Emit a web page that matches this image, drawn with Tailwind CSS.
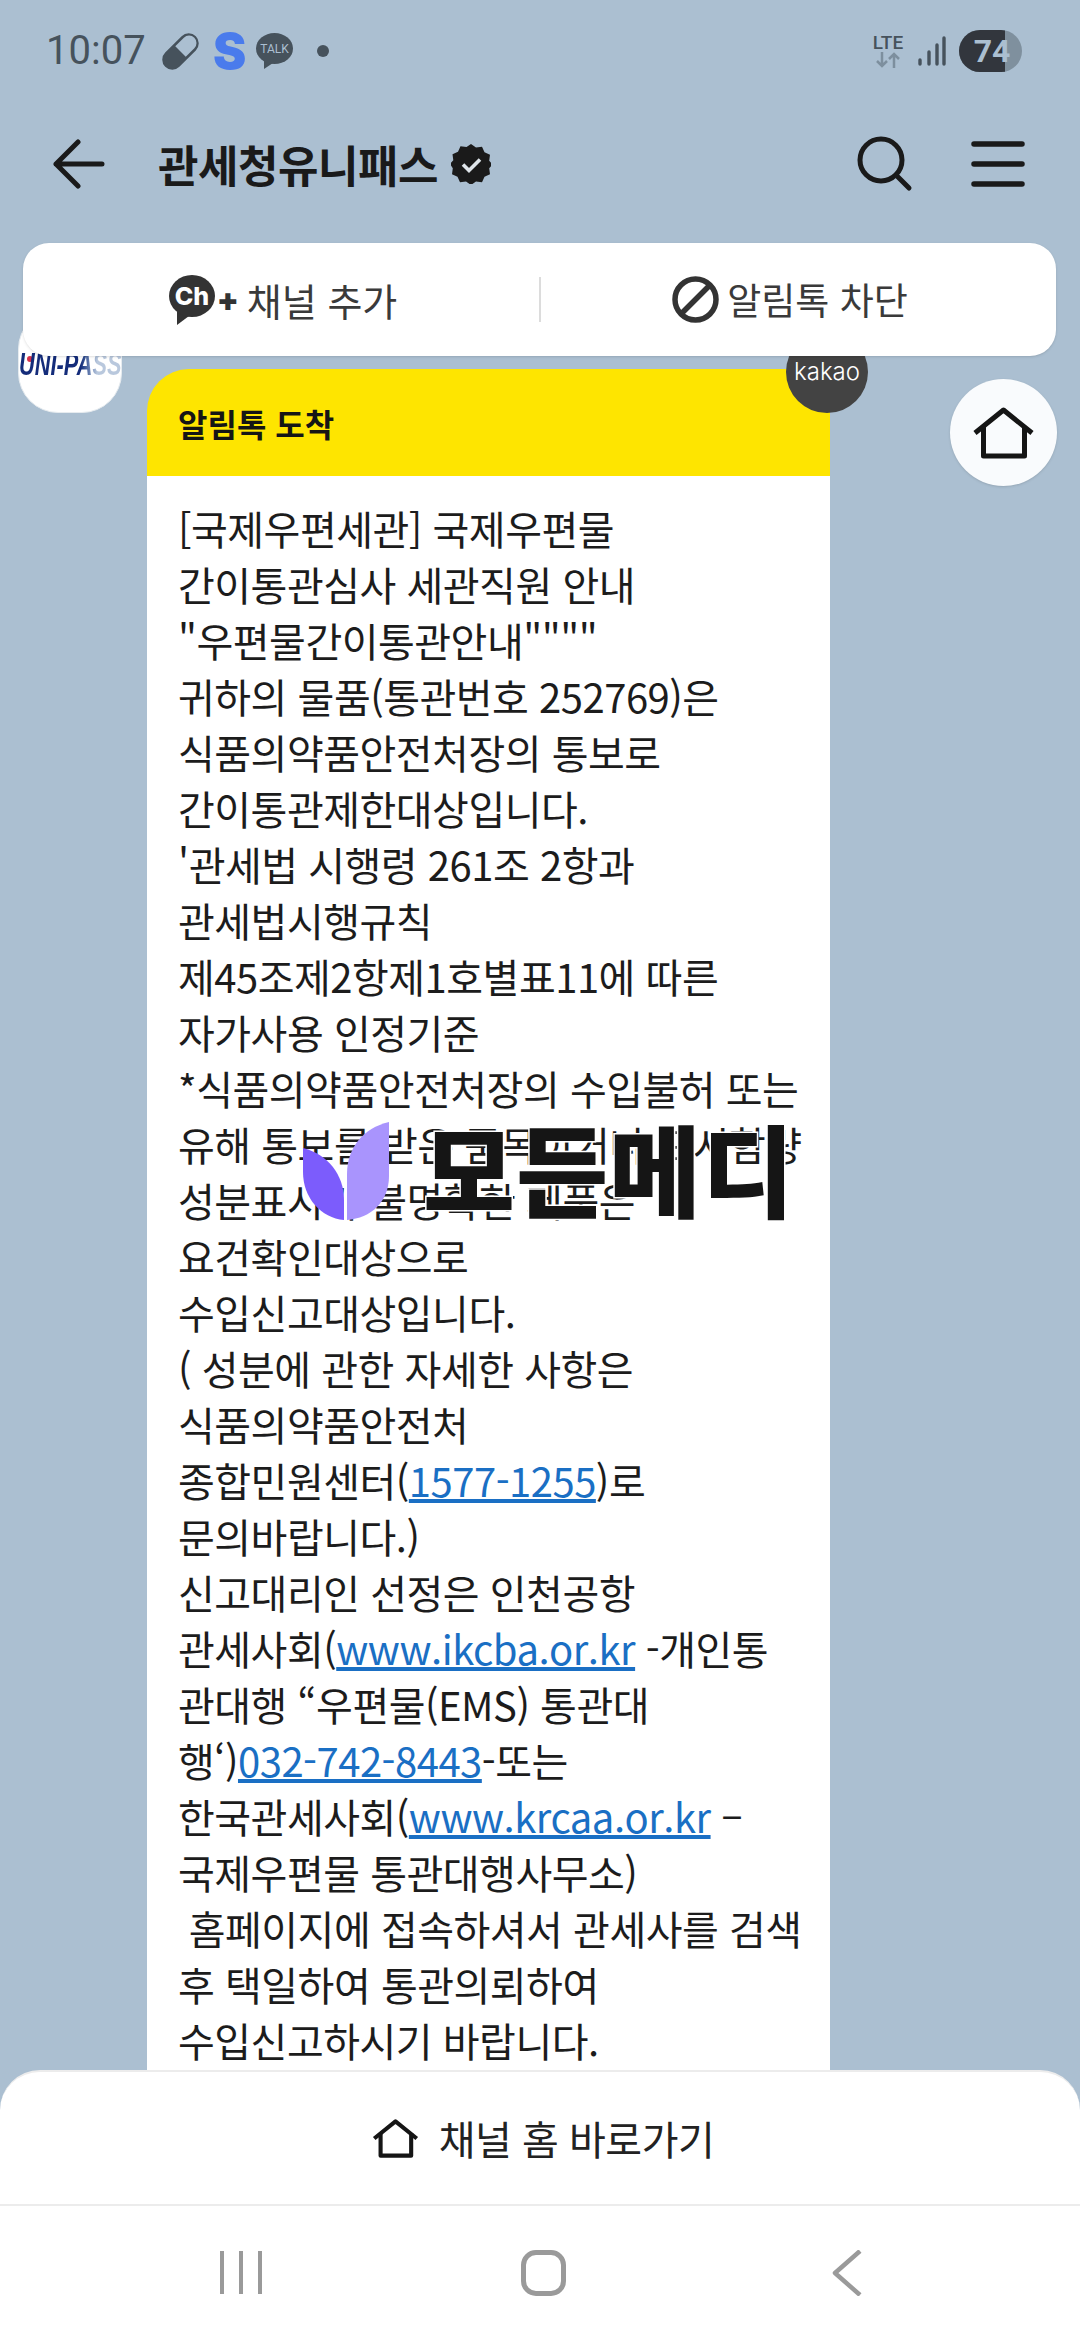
<!doctype html>
<html lang="ko">
<head>
<meta charset="utf-8">
<title>관세청유니패스</title>
<script src="https://cdn.jsdelivr.net/npm/@tailwindcss/browser@4"></script>
</head>
<body class="bg-[#abbfd1]">
<div class="relative w-[1080px] h-[2340px] overflow-hidden flex flex-col bg-[#abbfd1] text-[#1a1a1a] font-['Noto_Sans_CJK_KR',sans-serif]">

  <!-- status bar -->
  <div class="h-[102px] shrink-0 flex items-center justify-between pl-[46px] pr-[58px] text-[#46525c]">
    <div class="flex items-center">
      <span class="text-[40px] font-['Roboto',sans-serif] w-[116px]">10:07</span>
      <svg class="w-[37px] h-[37px]" viewBox="0 0 35 35">
        <g transform="rotate(-45 17.5 17.5)">
          <rect x="-3" y="8" width="41" height="19" rx="9.5" fill="#46525c"/>
          <path d="M17.5 10.5H29a7 7 0 0 1 0 14H17.5z" fill="#abbfd1"/>
        </g>
      </svg>
      <span class="ml-[14px] w-[28px] text-[50px] leading-none font-black font-['Inter',sans-serif] text-[#4a7bec]">S</span>
      <svg class="ml-[15px] w-[37px] h-[36px]" viewBox="0 0 37 36">
        <path d="M8 27 L8 36 L17 30 Z" fill="#46525c"/>
        <ellipse cx="18.5" cy="15.5" rx="18.5" ry="15.5" fill="#46525c"/>
        <text x="18.5" y="20" text-anchor="middle" font-size="12" font-family="Roboto" fill="#abbfd1">TALK</text>
      </svg>
      <span class="ml-[24px] w-[12px] h-[12px] rounded-full bg-[#46525c]"></span>
    </div>
    <div class="flex items-center">
      <div class="w-[34px] flex flex-col items-center">
        <span class="text-[19px] leading-[18px] font-medium font-['Roboto',sans-serif]">LTE</span>
        <svg class="w-[24px] h-[16px]" viewBox="0 0 24 16" fill="none" stroke="#7d8f9e" stroke-width="2.5">
          <path d="M6 0V14M1 9L6 14L11 9"/>
          <path d="M18 16V2M13 7L18 2L23 7"/>
        </svg>
      </div>
      <svg class="ml-[13px] w-[28px] h-[30px]" viewBox="0 0 28 30" fill="none" stroke="#46525c" stroke-width="3.4" stroke-linecap="round">
        <path d="M2 28V24M11 28V16M19 28V9M26 28V2"/>
      </svg>
      <div class="ml-[13px] relative w-[63px] h-[42px] rounded-full overflow-hidden bg-[#7f909e]">
        <div class="absolute left-0 top-0 bottom-0 w-[46px] bg-[#32363d]"></div>
        <span class="absolute inset-0 flex items-center justify-center pl-[3px] text-[32px] font-bold font-['Roboto',sans-serif] text-[#abbfd1]">74</span>
      </div>
    </div>
  </div>

  <!-- header -->
  <div class="h-[124px] shrink-0 flex items-center pl-[53px] pr-[55px]">
    <svg class="w-[52px] h-[50px]" viewBox="0 0 52 50" fill="none" stroke="#1a1a1a" stroke-width="5" stroke-linecap="round" stroke-linejoin="round">
      <path d="M49 25H3M25 3L3 25L25 47"/>
    </svg>
    <span class="ml-[53px] text-[44px] leading-none font-bold tracking-[-0.5px]">관세청유니패스</span>
    <svg class="ml-[13px] w-[40px] h-[40px]" viewBox="0 0 40 40">
      <path d="M20 0l5 3.5 6-.8 2.5 5.500 5.500 2.500-.8 6 3.300 3.800-3.300 3.800.8 6-5.500 2.500-2.500 5.500-6-.8-5 3.500-5-3.500-6 .8-2.500-5.500-5.500-2.500.8-6L-1 20l3.300-3.800-.8-6 5.500-2.500 2.500-5.500 6 .8z" fill="#1a1a1a"/>
      <path d="M12 20.500l6 6 11-11" fill="none" stroke="#dfe5ea" stroke-width="3.600"/>
    </svg>
    <svg class="ml-auto w-[56px] h-[56px]" viewBox="0 0 56 56" fill="none" stroke="#1a1a1a" stroke-width="5" stroke-linecap="round">
      <circle cx="24" cy="24" r="21"/>
      <path d="M39 39L52 52"/>
    </svg>
    <svg class="ml-[58px] w-[54px] h-[46px]" viewBox="0 0 54 46" fill="none" stroke="#1a1a1a" stroke-width="5.500" stroke-linecap="round">
      <path d="M3 3H51M3 23H51M3 43H51"/>
    </svg>
  </div>

  <!-- chat -->
  <div class="relative flex-1 min-h-0 overflow-hidden">
    <div class="flex items-start pl-[18px] pt-[83px]">
      <div class="relative w-[104px] h-[104px] shrink-0 rounded-[40px] bg-white border border-[#e6ebef] overflow-hidden flex justify-center pt-[36px]">
        <span class="absolute left-[8px] top-[46px] w-[6px] h-[6px] rounded-full bg-[#d8324a]"></span>
        <span class="inline-block scale-x-[0.68] text-[32px] leading-[36px] h-[36px] font-black italic font-['Liberation_Sans',sans-serif] bg-gradient-to-r from-[#142c7a] from-[60%] to-[#b9c8dd] to-[76%] bg-clip-text text-transparent whitespace-nowrap">UNI-PASS</span>
      </div>
      <div class="relative ml-[25px] mt-[60px] w-[683px] shrink-0">
        <div class="h-[107px] rounded-t-[42px] bg-[#fee500] flex items-center pl-[31px] text-[32px] font-bold text-[#151515]">알림톡 도착</div>
        <div class="bg-white pl-[31px] pt-[24px] pb-[60px] text-[40px] leading-[56px] text-[#1c1c1c] whitespace-nowrap tracking-[-0.500px]">
          [국제우편세관] 국제우편물<br>
          간이통관심사 세관직원 안내<br>
          "우편물간이통관안내""""<br>
          귀하의 물품(통관번호 252769)은<br>
          식품의약품안전처장의 통보로<br>
          간이통관제한대상입니다.<br>
          '관세법 시행령 261조 2항과<br>
          관세법시행규칙<br>
          제45조제2항제1호별표11에 따른<br>
          자가사용 인정기준<br>
          *식품의약품안전처장의 수입불허 또는<br>
          유해 통보를 받은 품목이거나 표시함량<br>
          성분표시가 불명확한 제품은<br>
          요건확인대상으로<br>
          수입신고대상입니다.<br>
          ( 성분에 관한 자세한 사항은<br>
          식품의약품안전처<br>
          종합민원센터(<a class="text-[#1a6fc4] underline">1577-1255</a>)로<br>
          문의바랍니다.)<br>
          신고대리인 선정은 인천공항<br>
          관세사회(<a class="text-[#1a6fc4] underline">www.ikcba.or.kr</a> -개인통<br>
          관대행 “우편물(EMS) 통관대<br>
          행‘)<a class="text-[#1a6fc4] underline">032-742-8443</a>-또는<br>
          한국관세사회(<a class="text-[#1a6fc4] underline">www.krcaa.or.kr</a> –<br>
          국제우편물 통관대행사무소)<br>
          &nbsp;홈페이지에 접속하셔서 관세사를 검색<br>
          후 택일하여 통관의뢰하여<br>
          수입신고하시기 바랍니다.
        </div>
        <!-- kakao badge -->
        <div class="absolute left-[639px] top-[-38px] w-[82px] h-[82px] rounded-full bg-[#434343] flex items-center justify-center text-[24px] font-light text-white font-['Inter',sans-serif]">kakao</div>
      </div>
    </div>

    <!-- channel bar -->
    <div class="absolute left-[23px] top-[17px] w-[1033px] h-[113px] rounded-[26px] bg-white flex items-center shadow-sm">
      <div class="w-[516px] shrink-0 flex items-center justify-center pl-[4px]">
        <svg class="w-[46px] h-[50px]" viewBox="0 0 46 50">
          <path d="M8 36V50L20 41Z" fill="#333"/>
          <ellipse cx="23" cy="21" rx="23" ry="21" fill="#333"/>
          <text x="23" y="30" text-anchor="middle" font-size="25" font-weight="800" font-family="Inter" fill="#fff">Ch</text>
        </svg>
        <span class="ml-[2px] text-[32px] font-black leading-none text-[#333] font-['Inter',sans-serif]">+</span>
        <span class="ml-[8px] text-[38px] leading-none text-[#3a3a3a]">채널 추가</span>
      </div>
      <div class="w-[2px] h-[45px] bg-[#dcdcdc]"></div>
      <div class="flex-1 flex items-center justify-center pr-[17px]">
        <svg class="w-[47px] h-[47px]" viewBox="0 0 47 47" fill="none" stroke="#333" stroke-width="5.500">
          <circle cx="23.500" cy="23.500" r="20.500"/>
          <path d="M9 38L38 9"/>
        </svg>
        <span class="ml-[8px] text-[37px] leading-none text-[#3a3a3a]">알림톡 차단</span>
      </div>
    </div>

    <!-- floating home button -->
    <div class="absolute left-[950px] top-[153px] w-[107px] h-[107px] rounded-full bg-[#f9fbfd] shadow-sm flex items-center justify-center">
      <svg class="w-[63px] h-[52px]" viewBox="0 0 63 52" fill="none" stroke="#151515" stroke-width="5" stroke-linejoin="round">
        <path d="M3 26L31.500 3L60 26"/>
        <path d="M11.500 19V49H52.500V19"/>
      </svg>
    </div>
  </div>

  <!-- channel home sheet -->
  <div class="relative -mt-[40px] h-[134px] shrink-0 rounded-t-[40px] bg-white border-t-2 border-[#ececec] flex items-center justify-center pl-[6px]">
    <svg class="w-[47px] h-[41px]" viewBox="0 0 63 52" fill="none" stroke="#151515" stroke-width="5.500" stroke-linejoin="round">
      <path d="M3 26L31.500 3L60 26"/>
      <path d="M11.500 19V49H52.500V19"/>
    </svg>
    <span class="ml-[20px] text-[40px] leading-none text-[#222] tracking-[-0.500px]">채널 홈 바로가기</span>
  </div>

  <!-- nav bar -->
  <div class="h-[136px] shrink-0 bg-white border-t-2 border-[#ececec] relative">
    <div class="absolute left-[220px] top-[45px] flex gap-[15px]">
      <span class="w-[4px] h-[43px] bg-[#9a9a9a]"></span>
      <span class="w-[4px] h-[43px] bg-[#9a9a9a]"></span>
      <span class="w-[4px] h-[43px] bg-[#9a9a9a]"></span>
    </div>
    <div class="absolute left-[521px] top-[44px] w-[45px] h-[46px] rounded-[15px] border-[5px] border-[#9a9a9a]"></div>
    <svg class="absolute left-[831px] top-[44px] w-[32px] h-[46px]" viewBox="0 0 32 46" fill="none" stroke="#9a9a9a" stroke-width="4.500" stroke-linejoin="round">
      <path d="M29 1L4 23L29 45"/>
    </svg>
  </div>

  <!-- watermark -->
  <div class="absolute left-[303px] top-[1122px] flex items-end h-[98px]">
    <svg class="w-[86px] h-[98px]" viewBox="0 0 86 98">
      <path d="M0 26C24 32 41 52 41 78V98C18 96 0 76 0 50Z" fill="#7c5cfc"/>
      <path d="M44 98V52C44 26 60 6 86 0V54C86 80 68 96 44 98Z" fill="#a994fd"/>
    </svg>
    <span class="ml-[34px] text-[100px] leading-[86px] h-[96px] font-black tracking-[1px] text-[#151515] whitespace-nowrap [-webkit-text-stroke:3px_white] [paint-order:stroke_fill]">모든메디</span>
  </div>
</div>
</body>
</html>
